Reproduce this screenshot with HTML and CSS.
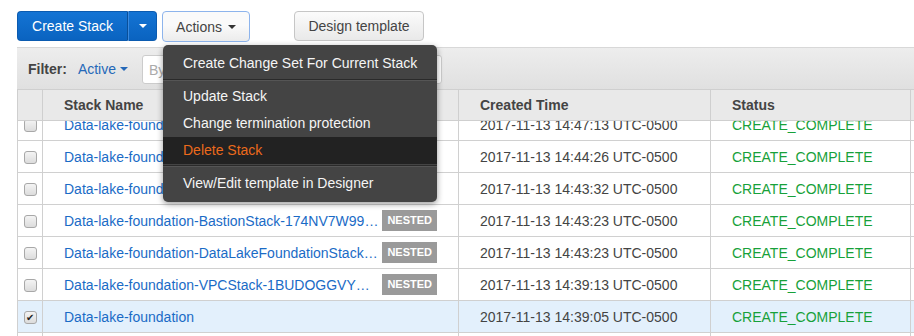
FILE: index.html
```html
<!DOCTYPE html>
<html lang="en">
<head>
    <meta charset="UTF-8">
    <meta name="viewport" content="width=device-width, initial-scale=1.0">
    <title>Stacks</title>
    <link rel="stylesheet" href="styles.css">
</head>
<body>
    <div class="page">
        <div class="toolbar">
            <div class="split-btn">
                <button class="btn-primary main">Create Stack</button>
                <button class="btn-primary toggle"><span class="caret"></span></button>
            </div>
            <div class="actions">
                <button class="btn focused">Actions <span class="caret dark"></span></button>
                <ul class="menu">
                    <li>Create Change Set For Current Stack</li>
                    <li class="divider"></li>
                    <li>Update Stack</li>
                    <li>Change termination protection</li>
                    <li class="danger">Delete Stack</li>
                    <li class="divider"></li>
                    <li>View/Edit template in Designer</li>
                </ul>
            </div>
            <button class="btn design">Design template</button>
        </div>

        <div class="panel">
            <div class="filter-bar">
                <span class="filter-label">Filter:</span>
                <span class="filter-value">Active <span class="caret blue"></span></span>
                <input class="filter-input" type="text" placeholder="By Stack Name">
            </div>
            <table class="grid">
                <colgroup>
                    <col class="c-check">
                    <col class="c-name">
                    <col class="c-time">
                    <col class="c-status">
                    <col class="c-extra">
                </colgroup>
                <thead>
                    <tr>
                        <th></th>
                        <th>Stack Name</th>
                        <th>Created Time</th>
                        <th>Status</th>
                        <th></th>
                    </tr>
                </thead>
            </table>
            <div class="grid-body">
                <table class="grid rows">
                    <colgroup>
                        <col class="c-check">
                        <col class="c-name">
                        <col class="c-time">
                        <col class="c-status">
                        <col class="c-extra">
                    </colgroup>
                    <tbody>
                        <tr>
                            <td><span class="check"></span></td>
                            <td><div class="name"><a>Data-lake-foundation-S3Stack-2F1K9W8LQ0PX</a></div></td>
                            <td>2017-11-13 14:47:13 UTC-0500</td>
                            <td class="ok">CREATE_COMPLETE</td>
                            <td></td>
                        </tr>
                        <tr>
                            <td><span class="check"></span></td>
                            <td><div class="name"><a>Data-lake-foundation-IAMStack-1XK3EQ2R9MUT</a></div></td>
                            <td>2017-11-13 14:44:26 UTC-0500</td>
                            <td class="ok">CREATE_COMPLETE</td>
                            <td></td>
                        </tr>
                        <tr>
                            <td><span class="check"></span></td>
                            <td><div class="name"><a>Data-lake-foundation-ElasticsearchStack-7QW2</a></div></td>
                            <td>2017-11-13 14:43:32 UTC-0500</td>
                            <td class="ok">CREATE_COMPLETE</td>
                            <td></td>
                        </tr>
                        <tr>
                            <td><span class="check"></span></td>
                            <td><div class="name"><a>Data-lake-foundation-BastionStack-174NV7W99XYZ</a><span class="badge">NESTED</span></div></td>
                            <td>2017-11-13 14:43:23 UTC-0500</td>
                            <td class="ok">CREATE_COMPLETE</td>
                            <td></td>
                        </tr>
                        <tr>
                            <td><span class="check"></span></td>
                            <td><div class="name"><a>Data-lake-foundation-DataLakeFoundationStack-1ABC</a><span class="badge">NESTED</span></div></td>
                            <td>2017-11-13 14:43:23 UTC-0500</td>
                            <td class="ok">CREATE_COMPLETE</td>
                            <td></td>
                        </tr>
                        <tr>
                            <td><span class="check"></span></td>
                            <td><div class="name"><a>Data-lake-foundation-VPCStack-1BUDOGGVYQWERT</a><span class="badge">NESTED</span></div></td>
                            <td>2017-11-13 14:39:13 UTC-0500</td>
                            <td class="ok">CREATE_COMPLETE</td>
                            <td></td>
                        </tr>
                        <tr class="selected">
                            <td><span class="check checked">&#10004;</span></td>
                            <td><div class="name"><a>Data-lake-foundation</a></div></td>
                            <td>2017-11-13 14:39:05 UTC-0500</td>
                            <td class="ok">CREATE_COMPLETE</td>
                            <td></td>
                        </tr>
                        <tr>
                            <td><span class="check"></span></td>
                            <td><div class="name"><a>Data-lake-foundation-old</a></div></td>
                            <td>2017-11-13 14:30:00 UTC-0500</td>
                            <td class="ok">CREATE_COMPLETE</td>
                            <td></td>
                        </tr>
                    </tbody>
                </table>
            </div>
        </div>
    </div>
</body>
</html>
```

FILE: styles.css
```css
body {
    margin: 0;
    font-family: "Liberation Sans", Arial, sans-serif;
    font-size: 14px;
    color: #444;
    background-color: white;
    overflow: hidden;
}

.page {
    padding: 11px 0 0 17px;
}

.toolbar {
    display: flex;
    align-items: flex-start;
    height: 30px;
}

button {
    font-family: inherit;
    font-size: 14px;
    cursor: pointer;
}

.split-btn {
    display: flex;
}

.btn-primary {
    height: 30px;
    border: 1px solid #0b5bb0;
    background: linear-gradient(#1474d4, #0a63c0);
    color: white;
    margin: 0;
}

.btn-primary.main {
    width: 111px;
    border-radius: 4px 0 0 4px;
    border-right-color: #0a4f98;
    padding: 0;
}

.btn-primary.toggle {
    width: 29px;
    border-left: 1px solid #3a8ae0;
    border-radius: 0 4px 4px 0;
    padding: 0;
}

.caret {
    display: inline-block;
    width: 0;
    height: 0;
    border-left: 4px solid transparent;
    border-right: 4px solid transparent;
    border-top: 4px solid white;
    vertical-align: middle;
    margin-top: -2px;
}

.caret.dark {
    border-top-color: #333;
    margin-left: 2px;
}

.caret.blue {
    border-top-color: #2568b8;
}

.btn {
    height: 30px;
    padding: 0 14px;
    border: 1px solid #c6c6c6;
    border-radius: 4px;
    background: linear-gradient(#fbfbfb, #e9e9e9);
    color: #444;
    margin: 0;
}

.btn.focused {
    height: 31px;
    width: 88px;
    padding: 0;
    border-color: #8db4ec;
    background: linear-gradient(#fafafa 45%, #ececec);
}

.actions {
    position: relative;
    margin-left: 5px;
}

.btn.design {
    margin-left: 44px;
    width: 130px;
    padding: 0;
}

.menu {
    position: absolute;
    top: 34px;
    left: 1px;
    width: 274px;
    margin: 0;
    padding: 6px 0 5px;
    list-style: none;
    background-color: #444;
    border-radius: 5px;
    box-shadow: 0 2px 6px rgba(0, 0, 0, 0.4);
    z-index: 5;
}

.menu li {
    padding: 0 20px;
    height: 27px;
    line-height: 26px;
    color: #f5f5f5;
    white-space: nowrap;
}

.menu li:first-child {
    height: 25px;
    line-height: 25px;
}

.menu li.divider {
    height: 0;
    padding: 0;
    margin: 3px 0 2px;
    border-top: 1px solid #2a2a2a;
    border-bottom: 1px solid #555;
}

.menu li.danger {
    background-color: #222;
    color: #ec6a1c;
}

.menu li.danger + .divider {
    margin-top: 1px;
    margin-bottom: 3px;
}

.panel {
    margin-top: 6px;
    width: 1000px;
}

.filter-bar {
    height: 41px;
    border-top: 1px solid #d8d8d8;
    background: linear-gradient(#ededed, #e0e0e0);
    display: flex;
    align-items: center;
    padding-left: 11px;
}

.filter-label {
    font-weight: bold;
    color: #444;
}

.filter-value {
    color: #2568b8;
    margin-left: 11px;
}

.filter-input {
    margin-left: 14px;
    margin-top: 2px;
    width: 300px;
    height: 29px;
    box-sizing: border-box;
    border: 1px solid #ccc;
    border-radius: 3px;
    font-family: inherit;
    font-size: 14px;
    padding: 0 6px;
}

.filter-input::placeholder {
    color: #aaa;
}

.grid {
    border-collapse: collapse;
    table-layout: fixed;
    width: 1000px;
}

.c-check { width: 25px; }
.c-name { width: 416px; }
.c-time { width: 252px; }
.c-status { width: 200px; }

.grid th {
    height: 30px;
    background-color: #e9e9e9;
    border: 1px solid #cfcfcf;
    text-align: left;
    padding: 0 0 0 21px;
    font-weight: bold;
    color: #444;
}

.grid th:first-child {
    padding: 0;
}

.grid-body {
    height: 215px;
    overflow: hidden;
}

.rows {
    margin-top: -12px;
}

.grid td {
    height: 31px;
    padding: 0 0 0 21px;
    border: 1px solid #d0d0d0;
    white-space: nowrap;
    overflow: hidden;
}

.grid td:first-child {
    padding: 0;
    text-align: center;
}

.grid tr:first-child td {
    border-top: none;
}

.selected td {
    background-color: #e3f0fc;
}

.name {
    display: flex;
    align-items: center;
}

.name a {
    color: #1a6bc6;
    max-width: 315px;
    overflow: hidden;
    text-overflow: ellipsis;
    white-space: nowrap;
}

.badge {
    margin-left: auto;
    margin-right: 21px;
    background-color: #9a9a9a;
    color: white;
    font-size: 11px;
    font-weight: bold;
    padding: 4px 5px;
    line-height: 13px;
}

.ok {
    color: #17a13a;
}

.check {
    display: inline-block;
    width: 11px;
    height: 11px;
    border: 1px solid #a8a8a8;
    border-radius: 3px;
    background: linear-gradient(#f4f4f4, #dcdcdc);
    vertical-align: middle;
    font-size: 10px;
    line-height: 11px;
    color: #222;
    text-align: center;
}
```
